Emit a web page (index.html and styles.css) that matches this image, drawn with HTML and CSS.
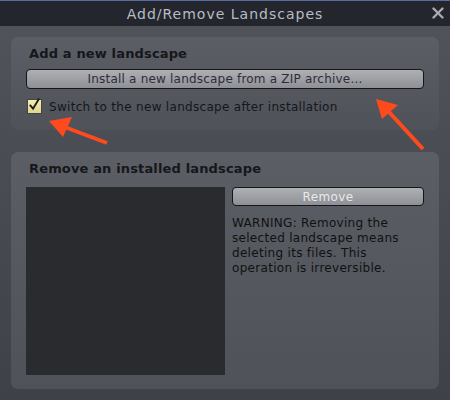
FILE: index.html
```html
<!DOCTYPE html>
<html lang="en">
<head>
    <meta charset="UTF-8">
    <title>Add/Remove Landscapes</title>
    <link rel="stylesheet" href="styles.css">
</head>
<body>
    <div class="window">
        <div class="titlebar">
            <span class="title">Add/Remove Landscapes</span>
            <span class="close">
                <svg width="12" height="12" viewBox="0 0 12 12"><path d="M1.5 1.5 L10.5 10.5 M10.5 1.5 L1.5 10.5" stroke="#a9abb0" stroke-width="2.4" stroke-linecap="round"/></svg>
            </span>
        </div>

        <div class="content">
            <!-- add -->
            <div class="group group-add">
                <div class="group-title">Add a new landscape</div>
                <button class="btn">Install a new landscape from a ZIP archive...</button>
                <label class="check-row">
                    <span class="checkbox">
                        <svg width="15" height="15" viewBox="0 0 15 15"><path d="M3 8 L6.5 12 L13 1" fill="none" stroke="#1c1c1c" stroke-width="2"/></svg>
                    </span>
                    Switch to the new landscape after installation
                </label>
            </div>

            <!-- remove -->
            <div class="group group-remove">
                <div class="group-title">Remove an installed landscape</div>
                <div class="remove-body">
                    <div class="list"></div>
                    <div class="side">
                        <button class="btn btn-remove">Remove</button>
                        <p class="warning">WARNING: Removing the selected landscape means deleting its files. This operation is irreversible.</p>
                    </div>
                </div>
            </div>
        </div>

        <!-- annotation arrows -->
        <svg class="arrows" width="450" height="400" viewBox="0 0 450 400">
            <g fill="#ff4a1e" stroke="#ff4a1e">
                <line x1="107" y1="143" x2="62" y2="126" stroke-width="4"/>
                <polygon points="49,121 72,117 63,137" stroke="none"/>
                <line x1="423" y1="149" x2="389" y2="112" stroke-width="4"/>
                <polygon points="376,99 398,105 382,119" stroke="none"/>
            </g>
        </svg>
    </div>
</body>
</html>
```

FILE: styles.css
```css
html, body { margin: 0; padding: 0; }
body { font-family: "DejaVu Sans", sans-serif; font-size: 12px; color: #111; }

.window { position: relative; width: 450px; height: 400px; overflow: hidden; background: linear-gradient(#51545b, #3e4148); display: flex; flex-direction: column; }
.titlebar { height: 25px; flex: 0 0 25px; background: #23262c; border-top: 1px solid #5a6ca0; display: flex; align-items: center; justify-content: center; position: relative; }
.title { color: #b9bcc4; font-size: 14px; letter-spacing: 1px; }
.close { position: absolute; right: 6px; top: 6px; width: 12px; height: 12px; }

.content { flex: 1; padding: 11px; display: flex; flex-direction: column; gap: 22px; }
.group { border-radius: 7px; background: linear-gradient(#5b5e65, #4f5259); padding: 0 15px; box-sizing: border-box; }
.group-add { height: 93px; }
.group-remove { flex: 1; display: flex; flex-direction: column; padding-bottom: 14px; }
.group-title { font-weight: bold; font-size: 13px; letter-spacing: 0.15px; padding-left: 3px; color: #15171b; }
.group-add .group-title { margin-top: 9px; margin-bottom: 8px; }
.group-remove .group-title { margin-top: 9px; margin-bottom: 11px; }

.btn { display: block; width: 100%; height: 20px; padding: 0; font-family: "DejaVu Sans", sans-serif; font-size: 12px; color: #2f2b3b; border: 1px solid #15161a; border-radius: 4px; background: linear-gradient(#aeb0b4, #8e9095); letter-spacing: 0.2px; }
.btn-remove { height: 19px; color: #e8e9ec; letter-spacing: 0.4px; }

.check-row { display: flex; align-items: center; gap: 7px; margin-top: 10px; color: #15171b; letter-spacing: 0.3px; }
.checkbox { width: 15px; height: 15px; box-sizing: border-box; border: 1px solid #444; background: linear-gradient(#f5eeb0, #e0d590); margin-left: 1px; display: flex; }
.checkbox svg { margin: -3px 0 0 -1px; }

.remove-body { flex: 1; display: flex; gap: 7px; }
.list { width: 199px; background: #2a2b2f; }
.side { flex: 1; }
.warning { margin: 10px 0 0; line-height: 15px; color: #111; letter-spacing: 0.3px; }

.arrows { position: absolute; left: 0; top: 0; pointer-events: none; }
```
